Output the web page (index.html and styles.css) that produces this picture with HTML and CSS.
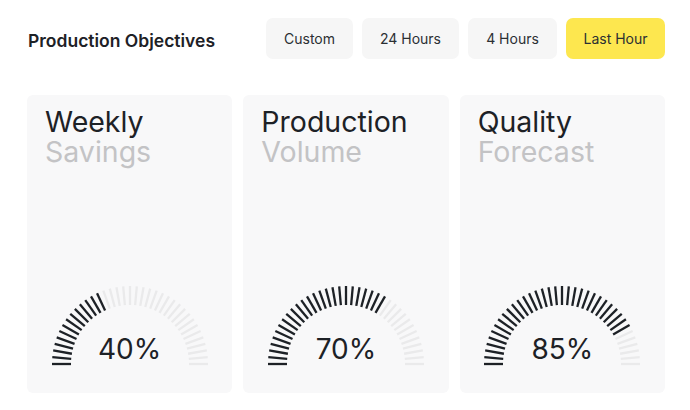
FILE: index.html
```html
<!DOCTYPE html>
<html lang="en">
<head>
    <meta charset="UTF-8">
    <meta name="viewport" content="width=device-width, initial-scale=1.0">
    <title>Production Objectives</title>
    <link rel="stylesheet" href="styles.css">
</head>
<body>

<div class="page">
    <!-- Cabecera con filtros -->
    <div class="header">
        <h1>Production Objectives</h1>
        <div class="filters">
            <button class="filter">Custom</button>
            <button class="filter">24 Hours</button>
            <button class="filter">4 Hours</button>
            <button class="filter active">Last Hour</button>
        </div>
    </div>

    <!-- Tarjetas -->
    <div class="cards">
        <div class="card">
            <h2>Weekly<span>Savings</span></h2>
            <div class="gauge" data-value="40"><div class="gauge-value">40%</div></div>
        </div>
        <div class="card">
            <h2>Production<span>Volume</span></h2>
            <div class="gauge" data-value="70"><div class="gauge-value">70%</div></div>
        </div>
        <div class="card">
            <h2>Quality<span>Forecast</span></h2>
            <div class="gauge" data-value="85"><div class="gauge-value">85%</div></div>
        </div>
    </div>
</div>

<script>
// Dibuja las marcas de cada indicador
const ticks = 37;
document.querySelectorAll('.gauge').forEach(gauge => {
    const value = Number(gauge.dataset.value);
    const active = Math.round(value / 100 * (ticks - 1));
    const cx = 85, cy = 83, r1 = 59, r2 = 78;
    let lines = '';
    for (let i = 0; i < ticks; i++) {
        const a = Math.PI - (Math.PI * i / (ticks - 1));
        const x1 = cx + r1 * Math.cos(a), y1 = cy - r1 * Math.sin(a);
        const x2 = cx + r2 * Math.cos(a), y2 = cy - r2 * Math.sin(a);
        const cls = i < active ? 'tick on' : 'tick';
        lines += `<line class="${cls}" x1="${x1.toFixed(2)}" y1="${y1.toFixed(2)}" x2="${x2.toFixed(2)}" y2="${y2.toFixed(2)}"/>`;
    }
    gauge.insertAdjacentHTML('afterbegin', `<svg width="170" height="86" viewBox="0 0 170 86">${lines}</svg>`);
});
</script>

</body>
</html>
```

FILE: styles.css
```css
body {
    margin: 0;
    background: #ffffff;
    font-family: Inter, "Noto Sans", sans-serif;
    color: #1d2126;
}
.page {
    padding: 18px 25px 0 27px;
}
.header {
    display: flex;
    align-items: center;
    justify-content: space-between;
    height: 41px;
}
h1 {
    margin: 0 0 0 1px;
    font-size: 17.5px;
    font-weight: 600;
    color: #1d2126;
    position: relative;
    top: 2px;
}
.filters {
    display: flex;
    gap: 9px;
}
.filter {
    height: 41px;
    padding: 0 17px;
    border: none;
    border-radius: 7px;
    background: #f6f6f6;
    font-family: Inter, "Noto Sans", sans-serif;
    font-size: 14px;
    color: #2b2f33;
}
.filter:nth-child(1) { width: 87px; }
.filter:nth-child(2) { width: 97px; }
.filter:nth-child(3) { width: 89px; }
.filter.active {
    width: 99px;
    background: #fde74f;
}

.cards {
    display: grid;
    grid-template-columns: repeat(3, 1fr);
    gap: 11px;
    margin-top: 36px;
}
.card {
    background: #f8f8f9;
    border-radius: 6px;
    height: 298px;
    display: flex;
    flex-direction: column;
    align-items: center;
}
h2 {
    align-self: flex-start;
    margin: 12px 0 0 18px;
    font-size: 28.5px;
    font-weight: 400;
    line-height: 30px;
    color: #1d2126;
}
h2 span {
    display: block;
    color: #c3c3c5;
}

/* Indicador semicircular */
.gauge {
    position: relative;
    margin-top: auto;
    margin-bottom: 26px;
    width: 170px;
    height: 86px;
}
.gauge svg {
    display: block;
}
.tick {
    stroke: #eaeaeb;
    stroke-width: 2.3;
}
.tick.on {
    stroke: #1d2126;
}
.gauge-value {
    position: absolute;
    left: 0;
    right: 0;
    bottom: 1px;
    text-align: center;
    font-size: 28px;
    color: #1d2126;
}
```
